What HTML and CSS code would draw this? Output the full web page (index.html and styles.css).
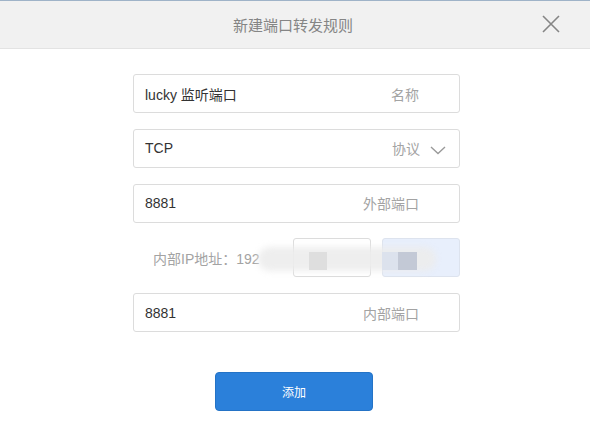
FILE: index.html
```html
<!DOCTYPE html>
<html lang="zh-CN">
<head>
  <meta charset="UTF-8">
  <title>新建端口转发规则</title>
  <link rel="stylesheet" href="styles.css">
</head>
<body>

<div class="dialog-head">
  <span class="dialog-title">新建端口转发规则</span>
  <span class="close-btn">
    <svg width="18" height="18" viewBox="0 0 18 18"><path d="M1 1L17 17M17 1L1 17" stroke="#858585" stroke-width="1.6" fill="none"/></svg>
  </span>
</div>

<div class="rule-form">
  <div class="field">
    <span class="value">lucky 监听端口</span>
    <span class="label">名称</span>
  </div>
  <div class="field select">
    <span class="value">TCP</span>
    <span class="label">协议</span>
    <svg class="chevron" width="16" height="10" viewBox="0 0 16 10"><path d="M1 2L8 8.5L15 2" stroke="#9a9a9a" stroke-width="1.4" fill="none"/></svg>
  </div>
  <div class="field">
    <span class="value">8881</span>
    <span class="label">外部端口</span>
  </div>

  <!-- 内部IP -->
  <div class="ip-row">
    <span class="ip-label">内部IP地址：192</span>
    <div class="ip-box"></div>
    <div class="ip-box active"></div>
    <div class="mask"></div>
    <div class="mask-block b1"></div>
    <div class="mask-block b2"></div>
    <div class="mask-block b3"></div>
  </div>

  <div class="field">
    <span class="value">8881</span>
    <span class="label">内部端口</span>
  </div>

  <div class="actions">
    <button class="add-btn">添加</button>
  </div>
</div>

</body>
</html>
```

FILE: styles.css
```css
body {
  margin: 0;
  background: #fff;
  font-family: "Liberation Sans", "Noto Sans CJK SC", sans-serif;
}
.dialog-head {
  height: 47px;
  border-top: 1px solid #9fb3c8;
  border-bottom: 1px solid #e3e3e3;
  background: #f1f1f1;
  display: flex;
  align-items: center;
  justify-content: center;
  position: relative;
}
.dialog-title {
  font-size: 15px;
  color: #858585;
  margin-left: -4px;
}
.close-btn {
  position: absolute;
  right: 30px;
  top: 14px;
  line-height: 0;
}
.rule-form {
  width: 327px;
  margin-left: 133px;
  padding-top: 25px;
  display: flex;
  flex-direction: column;
  gap: 15.75px;
}
.field {
  height: 37px;
  border: 1px solid #dcdcdc;
  border-radius: 3px;
  display: flex;
  align-items: center;
  padding: 0 40px 0 11px;
  font-size: 14px;
}
.field .value {
  flex: 1;
  color: #333;
}
.field .label {
  color: #a3a3a3;
}
.field.select {
  padding-right: 13px;
}
.field .chevron {
  margin-left: 10px;
  margin-top: 3px;
}
.ip-row {
  position: relative;
  height: 39px;
  display: flex;
  align-items: center;
  gap: 11px;
}
.ip-label {
  flex: 1;
  padding-left: 20px;
  font-size: 14px;
  color: #a3a3a3;
}
.ip-box {
  width: 76px;
  height: 37px;
  border: 1px solid #dcdcdc;
  border-radius: 3px;
  background: #fff;
}
.ip-box.active {
  background: #e8effc;
  border-color: #dde3ee;
}
.mask {
  position: absolute;
  left: 125px;
  top: 9px;
  width: 178px;
  height: 24px;
  border-radius: 12px;
  background: rgba(236, 236, 236, 0.9);
  filter: blur(3px);
}
.mask-block {
  position: absolute;
  top: 14px;
  height: 18px;
}
.mask-block.b1 {
  left: 176px;
  width: 18px;
  background: #dedede;
}
.mask-block.b2 {
  left: 249px;
  width: 16px;
  background: #dce2ed;
}
.mask-block.b3 {
  left: 265px;
  width: 19px;
  background: #c3c9d6;
}
.actions {
  display: flex;
  padding-top: 24px;
  padding-left: 82px;
}
.add-btn {
  width: 158px;
  height: 39px;
  border: 1px solid #2473c6;
  border-radius: 4px;
  background: #2b80da;
  color: #fff;
  font-size: 12px;
  font-family: "Noto Sans CJK SC", sans-serif;
}
```
